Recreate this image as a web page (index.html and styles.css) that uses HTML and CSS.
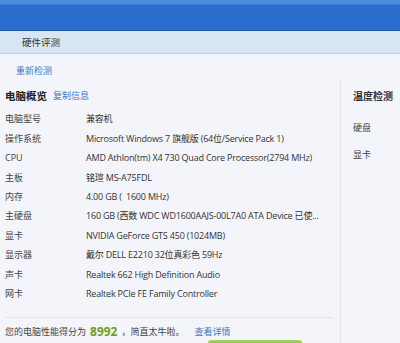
FILE: index.html
```html
<!DOCTYPE html>
<html lang="zh-CN">
<head>
    <meta charset="UTF-8">
    <title>硬件评测</title>
    <link rel="stylesheet" href="styles.css">
</head>
<body>
    <div class="titlebar"></div>
    <div class="tabbar"><span class="tab">硬件评测</span></div>

    <div class="main">
        <div class="toolbar"><a class="link">重新检测</a></div>

        <div class="panels">
            <div class="overview">
                <div class="overview-head">
                    <span class="head-title">电脑概览</span>
                    <a class="link">复制信息</a>
                </div>

                <div class="rows">
                    <div class="row"><span class="label">电脑型号</span><span class="value">兼容机</span></div>
                    <div class="row"><span class="label">操作系统</span><span class="value">Microsoft Windows 7 旗舰版 (64位/Service Pack 1)</span></div>
                    <div class="row"><span class="label">CPU</span><span class="value">AMD Athlon(tm) X4 730 Quad Core Processor(2794 MHz)</span></div>
                    <div class="row"><span class="label">主板</span><span class="value">铭瑄 MS-A75FDL</span></div>
                    <div class="row"><span class="label">内存</span><span class="value">4.00 GB (&nbsp; 1600 MHz)</span></div>
                    <div class="row"><span class="label">主硬盘</span><span class="value">160 GB (西数 WDC WD1600AAJS-00L7A0 ATA Device 已使...</span></div>
                    <div class="row"><span class="label">显卡</span><span class="value">NVIDIA GeForce GTS 450 (1024MB)</span></div>
                    <div class="row"><span class="label">显示器</span><span class="value">戴尔 DELL E2210 32位真彩色 59Hz</span></div>
                    <div class="row"><span class="label">声卡</span><span class="value">Realtek 662 High Definition Audio</span></div>
                    <div class="row"><span class="label">网卡</span><span class="value">Realtek PCIe FE Family Controller</span></div>
                </div>

                <div class="score">
                    您的电脑性能得分为 <span class="score-num">8992</span>，简直太牛啦。
                    <a class="link detail">查看详情</a>
                </div>
                <div class="score-bar"><span class="score-btn"></span></div>
            </div>

            <div class="temps">
                <div class="temps-title">温度检测</div>
                <div class="temp-item">硬盘</div>
                <div class="temp-item">显卡</div>
            </div>
        </div>
    </div>
</body>
</html>
```

FILE: styles.css
```css
html { height: 343px; overflow: hidden; }

body {
    margin: 0;
    height: 343px;
    background: #f3f5fa;
    font-family: "Open Sans", "Noto Sans CJK SC", sans-serif;
    font-size: 9px;
    color: #333;
    overflow: hidden;
}

.titlebar {
    height: 30px;
    background: linear-gradient(to bottom, #4a8fdc 0, #4a8fdc 4px, #2a6ece 5px, #2a6ccd 100%);
    border-bottom: 1px solid #1d559f;
}

.tabbar {
    height: 22px;
    background: #d6e6f5;
    border-bottom: 1px solid #c6cfd9;
    display: flex;
    align-items: center;
}
.tab { margin-left: 22px; font-size: 9.5px; color: #333; }

.link { color: #3a78c8; text-decoration: none; }

.toolbar {
    height: 26px;
    padding-left: 16px;
    display: flex;
    align-items: center;
    padding-top: 6px;
    box-sizing: border-box;
}

.panels { display: flex; height: 263px; overflow: hidden; }

.overview {
    width: 328px;
    padding-left: 5px;
    padding-right: 7px;
    padding-top: 8px;
}

.overview-head { display: flex; align-items: center; gap: 6px; height: 14px; }
.head-title { font-size: 10.5px; font-weight: bold; color: #222; }

.rows { margin-top: 7px; }
.row { display: flex; height: 19.45px; align-items: center; white-space: nowrap; }
.label { width: 81px; color: #444; }
.value { color: #333; letter-spacing: -0.2px; }

.score {
    margin-top: 14px;
    border-top: 1px solid #e2e5eb;
    padding-top: 5px;
    height: 16px;
    display: flex;
    align-items: center;
    gap: 2px;
    white-space: nowrap;
    color: #444;
}
.score-num { color: #6e9e1c; font-size: 12px; font-weight: bold; margin: 0 2px; }
.detail { margin-left: 8px; }

.score-bar { padding-left: 203px; padding-top: 1px; }
.score-btn {
    display: block;
    width: 94px;
    height: 4px;
    border-radius: 3px 3px 0 0;
    background: linear-gradient(to bottom, #a6d46a, #8cc44a);
}

.temps {
    flex: 1;
    border-left: 1px solid #e3e6ec;
    padding-left: 12px;
    padding-top: 9px;
}
.temps-title { font-size: 10px; font-weight: bold; color: #333; height: 14px; line-height: 14px; }
.temp-item { margin-top: 18px; height: 13px; line-height: 13px; color: #444; }
.temp-item + .temp-item { margin-top: 14px; }
```
